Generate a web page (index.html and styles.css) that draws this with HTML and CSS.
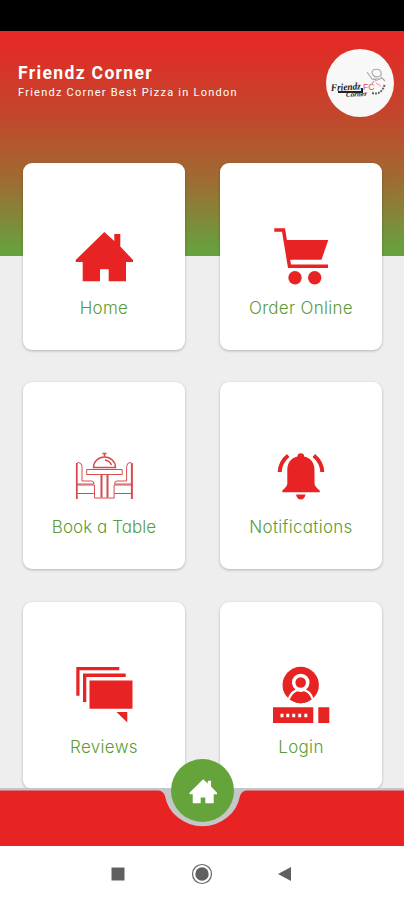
FILE: index.html
```html
<!DOCTYPE html>
<html lang="en">
<head>
  <meta charset="UTF-8">
  <meta name="viewport" content="width=device-width, initial-scale=1.0">
  <title>Friendz Corner</title>
  <link rel="stylesheet" href="styles.css">
</head>
<body>
  <div class="status-bar"></div>

  <header>
    <div class="brand">
      <h1>Friendz Corner</h1>
      <p>Friendz Corner Best Pizza in London</p>
    </div>
    <div class="logo">
      <svg viewBox="0 0 68 68">
        <g class="logo-text">
          <text x="5" y="42" font-size="10" textLength="30" lengthAdjust="spacingAndGlyphs" transform="rotate(-3 5 42)">Friendz</text>
          <text x="20" y="48" font-size="7" textLength="21" lengthAdjust="spacingAndGlyphs" transform="rotate(-3 20 48)">Corner</text>
        </g>
        <path d="M12 43h24v-4" fill="none" stroke="#222" stroke-width="2"/>
        <text x="37" y="41" font-size="8.500" class="logo-fc">FC</text>
        <g fill="none" stroke="#aaa" stroke-width="1.200">
          <path d="M46 24c0-5 9-5 9 0c2 4-7 6-9 0M41 23l5 7l4 1M55 28l4 4M48 32l-3 4M47 30l7 0"/>
        </g>
        <path d="M49 32l7-3M50 34l5 3" stroke="#e39a9f" fill="none"/>
        <path d="M46 44q9 3 13-9" stroke="#666" stroke-width="2" stroke-dasharray="2 1" fill="none"/>
      </svg>
    </div>
  </header>

  <main class="menu">
    <a class="card">
      <svg class="icon" viewBox="0 0 60 60">
        <path d="M30.300 6l10 9V8h6v12.500L59 34v2h-7v19.300H34.700v-12H26v12H8.700V36h-7v-2z"/>
      </svg>
      <span>Home</span>
    </a>
    <a class="card">
      <svg class="icon" viewBox="0 0 60 60">
        <path class="line" stroke-width="3.500" d="M3.300 4h9.200l6 36.300H57"/>
        <path d="M14.300 14H57.300L50.500 33.700H18z"/>
        <circle cx="24" cy="51.700" r="6.700"/>
        <circle cx="43.700" cy="51.700" r="6.700"/>
      </svg>
      <span>Order Online</span>
    </a>
    <a class="card">
      <svg class="icon thin" viewBox="0 0 60 60">
        <defs>
          <g id="chair">
            <path d="M2.500 54V20q0-2.500 2-2.500q3 0 3.500 4V36h9.500q2.500 0 2.500 3H3M2.500 40h18v8.500h-18M20.500 48.500V53"/>
            <path stroke-width="1.800" d="M2.800 18v36"/>
          </g>
        </defs>
        <use href="#chair"/>
        <use href="#chair" transform="translate(60.600 0) scale(-1 1)"/>
        <path d="M12.700 24.500h35.500v5H12.700zM20.500 53h20"/>
        <path stroke-width="1.500" d="M19.500 22.500a11 10.500 0 0 1 22 0zM28.500 8.500h4M30.500 8v4M31 15q5 1 6.500 5"/>
        <path stroke-width="2" d="M27.500 30v22.500M33.500 30v22.500"/>
      </svg>
      <span class="tight">Book a Table</span>
    </a>
    <a class="card">
      <svg class="icon" viewBox="0 0 60 60">
        <path d="M26.500 11.500a3.300 3.300 0 0 1 6.600 0C40 13 43.500 18 43.500 25v13.500q0 3 5.200 7v1.800H11.300v-1.800q5-4 5-7V25c0-7 3.500-12 10.200-13.500zM25 49.500h9.500q-1 5-4.700 5t-4.800-5z"/>
        <path class="line" stroke-width="4" d="M8.700 27q.5-10 8.500-16.500M51.300 27q-.5-10-8.500-16.500"/>
      </svg>
      <span>Notifications</span>
    </a>
    <a class="card">
      <svg class="icon" viewBox="0 0 60 60">
        <path d="M2.300 2h43v3.300H5.500v25.500H2.300zM9 8.500h42.700v3.400H12.300v25.200H9zM15.500 15.500h43v28.200h-43zM42.500 47h10.800v10.500z"/>
      </svg>
      <span>Reviews</span>
    </a>
    <a class="card">
      <svg class="icon" viewBox="0 0 60 60">
        <circle cx="29.700" cy="20" r="18.200"/>
        <path d="M17 34c1-5 4-8 7.500-9.500a8.800 8.800 0 1 1 10.500 0c3.500 1.500 6.500 4.500 7.500 9.500z" fill="#fff"/>
        <circle cx="29.700" cy="17.500" r="5.300"/>
        <path d="M19 34q3-6.500 7.500-7.700q3.200 1.500 6.400 0Q38 27.500 40.500 34q-5 4.200-10.800 4.200T19 34zM2 42.300h40.300V58H2zM47.300 42.300h11V58h-11z"/>
        <path d="M9.500 48.800h3v3.400h-3zM15.300 48.800h3v3.400h-3zM21.200 48.800h3v3.400h-3zM27.200 48.800h3v3.400h-3zM33.300 48.800h3v3.400h-3z" fill="#fff"/>
      </svg>
      <span>Login</span>
    </a>
  </main>

  <footer>
    <svg class="footer-bg" viewBox="0 0 404 58">
      <path d="M0 0h404v50H0z" fill="#c5c6c8"/>
      <path d="M0 2.500H158q5 0 7 5.500a38 36 0 0 0 75 0q2-5.500 7-5.500H404V58H0z" fill="#e72323"/>
    </svg>
    <a class="home-btn">
      <svg viewBox="0 0 60 60">
        <path d="M30.300 5l10 9V8h7v12.500L60 34v3h-7v19H35v-12H25v12H8V37H1v-3z"/>
      </svg>
    </a>
  </footer>

  <nav class="system-nav">
    <svg viewBox="0 0 24 24"><path d="M5.500 5.500h13v13h-13z"/></svg>
    <svg viewBox="0 0 24 24"><circle cx="12" cy="12" r="9.500" fill="none" stroke="#666" stroke-width="1.200"/><circle cx="12" cy="12" r="6.700"/></svg>
    <svg viewBox="0 0 24 24"><path d="M4 12l13-7v14z"/></svg>
  </nav>
</body>
</html>
```

FILE: styles.css
```css
* {
  box-sizing: border-box;
}
body {
  margin: 0;
  height: 900px;
  display: flex;
  flex-direction: column;
  overflow: hidden;
  font-family: Inter, "Open Sans", sans-serif;
  background-color: #eee;
}
.status-bar {
  height: 31px;
  flex-shrink: 0;
  background: #000;
}
header {
  height: 225px;
  flex-shrink: 0;
  display: flex;
  justify-content: space-between;
  align-items: flex-start;
  padding: 18px 10px 0 18px;
  background: linear-gradient(#e82626, #c2472c 38%, #9c6e33 68%, #68a03e 97%);
}
.brand {
  padding-top: 14px;
  color: #fff;
  font-family: Roboto, sans-serif;
}
.brand h1 {
  margin: 0;
  font-size: 17.500px;
  line-height: 21px;
  letter-spacing: 1.350px;
}
.brand p {
  margin: 0;
  font-size: 11px;
  line-height: 17px;
  letter-spacing: 1.240px;
}
.logo {
  width: 68px;
  height: 68px;
  border-radius: 50%;
  background: #f8f8f8;
}
.logo svg {
  display: block;
}
.logo-text {
  font-family: "Liberation Serif", serif;
  font-style: italic;
  font-weight: bold;
  fill: #222;
}
.logo-fc {
  font-family: "Liberation Sans", sans-serif;
  fill: #d94b50;
}
.menu {
  display: grid;
  grid-template-columns: 162px 162px;
  grid-auto-rows: 187px;
  gap: 32.400px 35px;
  justify-content: center;
  height: 626px;
  margin-top: -93px;
  padding-left: 1px;
}
.card {
  display: flex;
  flex-direction: column;
  align-items: center;
  padding-top: 63px;
  background: #fff;
  border-radius: 9px;
  box-shadow: 0 1px 3px rgba(0,0,0,0.25);
}
.icon {
  width: 60px;
  height: 60px;
  overflow: visible;
  fill: #e72323;
}
.icon .line {
  fill: none;
  stroke: #e72323;
}
.thin {
  fill: none;
  stroke: #d84a4e;
}
.card span {
  margin-top: 9px;
  font-size: 17px;
  font-weight: 300;
  line-height: 26px;
  letter-spacing: 0.300px;
  white-space: nowrap;
  color: #5b9b38;
  font-feature-settings: "cv11";
}
.card .tight {
  letter-spacing: 0.050px;
}
footer {
  position: relative;
  height: 58px;
  margin-top: -1px;
  flex-shrink: 0;
}
.footer-bg {
  display: block;
  width: 404px;
  height: 58px;
}
.home-btn {
  position: absolute;
  left: 171px;
  top: -29px;
  width: 63px;
  height: 63px;
  display: flex;
  align-items: center;
  justify-content: center;
  border-radius: 50%;
  background: #64a43b;
}
.home-btn svg {
  width: 28px;
  height: 28px;
  fill: #fff;
}
.system-nav {
  height: 54px;
  flex-shrink: 0;
  display: flex;
  justify-content: center;
  gap: 60px;
  padding-top: 16px;
  background: #fff;
}
.system-nav svg {
  width: 24px;
  height: 24px;
  fill: #606060;
}
```
